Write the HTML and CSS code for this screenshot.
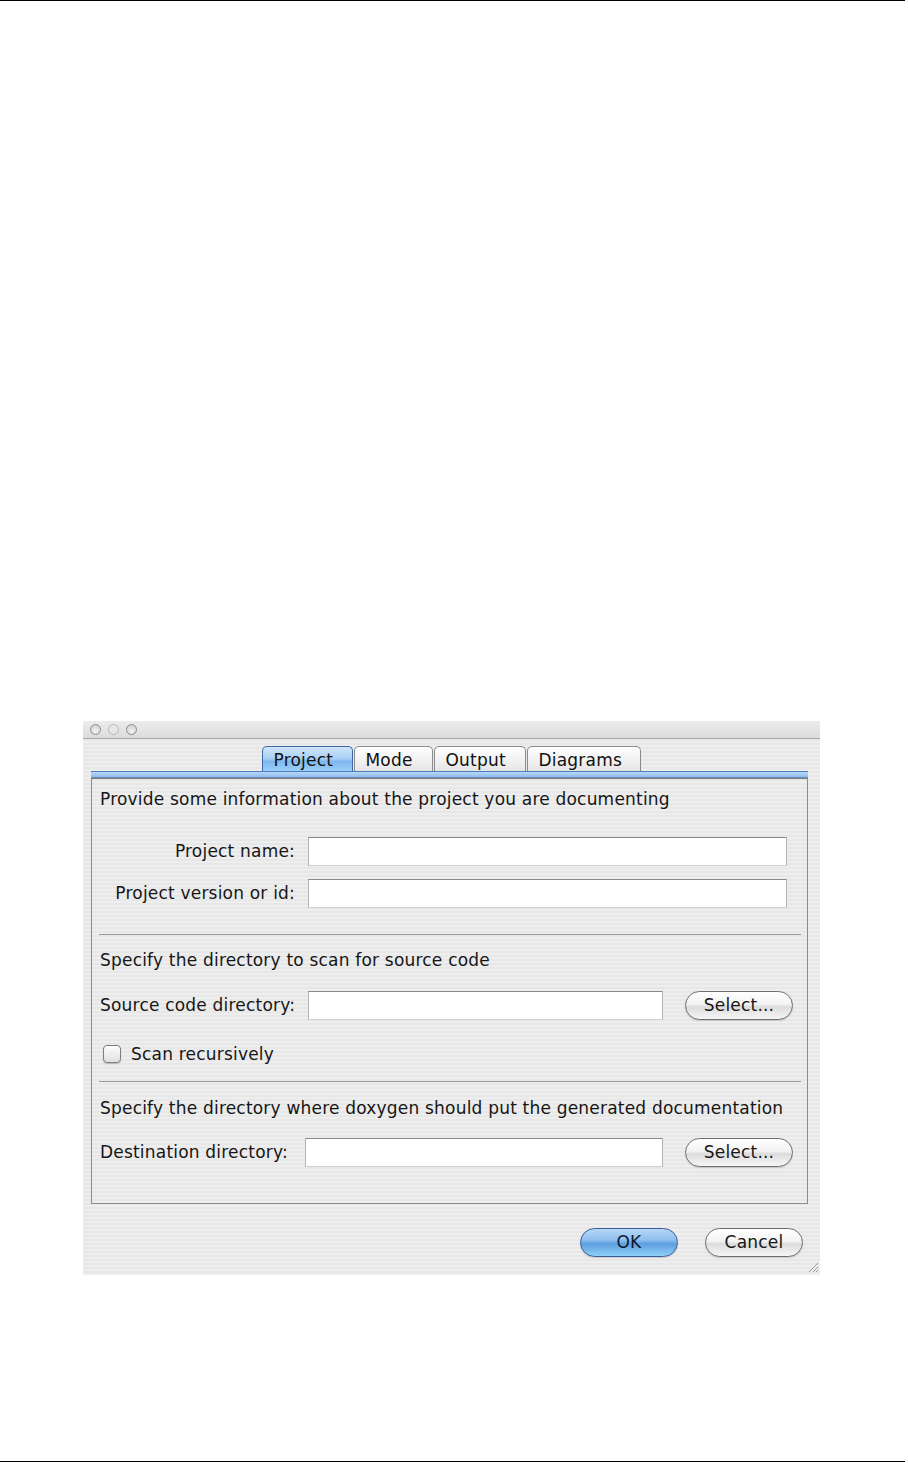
FILE: index.html
```html
<!DOCTYPE html>
<html>
<head>
<meta charset="utf-8">
<title>Doxygen Wizard</title>
<link rel="stylesheet" href="styles.css">
</head>
<body>
<div class="page">
  <div class="dialog">
    <div class="titlebar">
      <span class="light"></span><span class="light light-mid"></span><span class="light"></span>
    </div>
    <div class="dialog-body">
      <div class="tabs">
        <div class="tab tab-project selected">Project</div>
        <div class="tab tab-mode">Mode</div>
        <div class="tab tab-output">Output</div>
        <div class="tab tab-diagrams">Diagrams</div>
      </div>
      <div class="tabbar-line"></div>
      <div class="pane">
        <div class="heading h1">Provide some information about the project you are documenting</div>
        <div class="grid">
          <label class="rlabel">Project name:</label>
          <div class="input wide"></div>
          <label class="rlabel">Project version or id:</label>
          <div class="input wide"></div>
        </div>
        <div class="sep sep1"></div>
        <div class="heading h2">Specify the directory to scan for source code</div>
        <div class="row row-src">
          <label class="llabel">Source code directory:</label>
          <div class="input grow"></div>
          <div class="btn">Select...</div>
        </div>
        <div class="check-row">
          <span class="checkbox"></span><span class="check-label">Scan recursively</span>
        </div>
        <div class="sep sep2"></div>
        <div class="heading h3">Specify the directory where doxygen should put the generated documentation</div>
        <div class="row row-dst">
          <label class="llabel">Destination directory:</label>
          <div class="input grow"></div>
          <div class="btn">Select...</div>
        </div>
      </div>
      <div class="footer">
        <div class="btn btn-wide btn-ok">OK</div>
        <div class="btn btn-wide">Cancel</div>
      </div>
      <div class="grip-row">
        <svg class="grip" width="12" height="12" viewBox="0 0 12 12">
          <line x1="11" y1="2" x2="2" y2="11" stroke="#9a9a9a" stroke-width="1"/>
          <line x1="11" y1="6" x2="6" y2="11" stroke="#9a9a9a" stroke-width="1"/>
          <line x1="11" y1="9" x2="9" y2="11" stroke="#9a9a9a" stroke-width="1"/>
        </svg>
      </div>
    </div>
  </div>
</div>
</body>
</html>
```
FILE: styles.css
```css
html, body {
  margin: 0;
  padding: 0;
  background: #fff;
}
body {
  font-family: "DejaVu Sans", "Liberation Sans", sans-serif;
  color: #161616;
}
.page {
  width: 905px;
  height: 1460px;
  border-top: 1px solid #000;
  border-bottom: 1px solid #000;
  overflow: hidden;
}
.dialog {
  margin: 720px 0 0 83px;
  width: 737px;
  height: 554px;
  background: repeating-linear-gradient(to bottom, #eeeeee 0, #eeeeee 2px, #e7e7e7 2px, #e7e7e7 4px);
  display: flex;
  flex-direction: column;
}
.titlebar {
  height: 17px;
  background: linear-gradient(to bottom, #ececec, #dcdcdc);
  border-bottom: 1px solid #a9a9a9;
  display: flex;
  align-items: center;
  gap: 7px;
  padding-left: 7px;
}
.light {
  width: 9px;
  height: 9px;
  border-radius: 50%;
  border: 1.5px solid #8d8d8d;
  background: radial-gradient(circle at 50% 70%, #f4f4f4, #c9c9c9);
}
.light-mid {
  border-color: #b9b9b9;
  background: #e6e6e6;
}
.dialog-body {
  flex: 1;
  padding: 7px 12px 0 8px;
  display: flex;
  flex-direction: column;
}
.tabs {
  display: flex;
  justify-content: center;
  gap: 1px;
  height: 25px;
  padding-left: 3px;
}
.tab {
  box-sizing: border-box;
  height: 27px;
  padding-left: 11px;
  font-size: 17px;
  letter-spacing: 0.2px;
  line-height: 26px;
  border: 1px solid #8a8a8a;
  border-bottom: none;
  border-radius: 5px 5px 0 0;
  background: linear-gradient(to bottom, #fefefe 0%, #f2f2f2 50%, #e2e2e2 100%);
  color: #111;
  white-space: nowrap;
}
.tab-project { width: 91px; }
.tab-mode { width: 79px; }
.tab-output { width: 92px; }
.tab-diagrams { width: 114px; }
.tab.selected {
  border-color: #3f67a8;
  background: linear-gradient(to bottom, #cfe6fb 0%, #a8d0f4 45%, #7db8ef 55%, #a3d3fa 100%);
  position: relative;
  z-index: 1;
}
.tabbar-line {
  height: 5px;
  border-top: 1px solid #4a7cc0;
  border-bottom: 1px solid #6c8fbf;
  background: linear-gradient(to bottom, #b9d8f6, #8ebcee);
  position: relative;
  z-index: 2;
}
.pane {
  height: 424px;
  border: 1px solid #8c8c8c;
  border-top-color: #7a7a7a;
  padding: 0 6px 0 8px;
  font-size: 17px;
  letter-spacing: 0.2px;
}
.heading {
  height: 20px;
  line-height: 20px;
  white-space: nowrap;
}
.h1 { margin-top: 10px; }
.grid {
  margin-top: 28px;
  display: grid;
  grid-template-columns: 195px 479px;
  column-gap: 13px;
  row-gap: 13px;
}
.rlabel {
  text-align: right;
  line-height: 29px;
  white-space: nowrap;
}
.llabel {
  line-height: 29px;
  white-space: nowrap;
  flex: 0 0 auto;
}
.row-src .llabel { width: 195px; }
.row-dst .llabel { width: 192px; }
.input {
  box-sizing: border-box;
  height: 29px;
  background: #fff;
  border: 1px solid #b4b4b4;
  border-top-color: #8a8a8a;
  border-bottom-color: #d0d0d0;
}
.sep {
  height: 1px;
  background: #9b9b9b;
  margin-left: -1px;
}
.sep1 { margin-top: 26px; }
.sep2 { margin-top: 17px; }
.h2 { margin-top: 15px; }
.h3 { margin-top: 16px; }
.row {
  display: flex;
  align-items: center;
  margin-top: 21px;
}
.row-dst { margin-top: 20px; }
.row .input.grow {
  flex: 0 0 auto;
  margin-left: 13px;
}
.row-src .input.grow { width: 355px; }
.row-dst .input.grow { width: 358px; }
.btn {
  box-sizing: border-box;
  width: 108px;
  height: 29px;
  margin-left: 22px;
  border: 1px solid #6e6e6e;
  border-radius: 15px;
  background: linear-gradient(to bottom, #ffffff 0%, #f3f3f3 45%, #dcdcdc 55%, #f6f6f6 100%);
  text-align: center;
  line-height: 27px;
  font-size: 17px;
  letter-spacing: 0.2px;
  box-shadow: 0 1px 1px rgba(0,0,0,0.15);
  flex: 0 0 auto;
}
.check-row {
  margin-top: 24px;
  height: 20px;
  display: flex;
  align-items: center;
  padding-left: 3px;
}
.checkbox {
  box-sizing: border-box;
  width: 18px;
  height: 18px;
  border: 1px solid #7e7e7e;
  border-radius: 4px;
  background: linear-gradient(to bottom, #ffffff, #dedede);
  box-shadow: 0 1px 1px rgba(0,0,0,0.2);
}
.check-label {
  margin-left: 10px;
}
.footer {
  display: flex;
  justify-content: flex-end;
  gap: 27px;
  margin-top: 24px;
  padding-right: 5px;
}
.btn-wide {
  width: 98px;
  margin-left: 0;
}
.btn-ok {
  border-color: #3a5d9c;
  background: linear-gradient(to bottom, #b6d6f6 0%, #8fc0ee 40%, #5e9fe0 55%, #8ed0f7 100%);
  color: #0d1a2e;
}
.grip-row {
  display: flex;
  justify-content: flex-end;
  margin-top: 4px;
  margin-right: -11px;
}
```
